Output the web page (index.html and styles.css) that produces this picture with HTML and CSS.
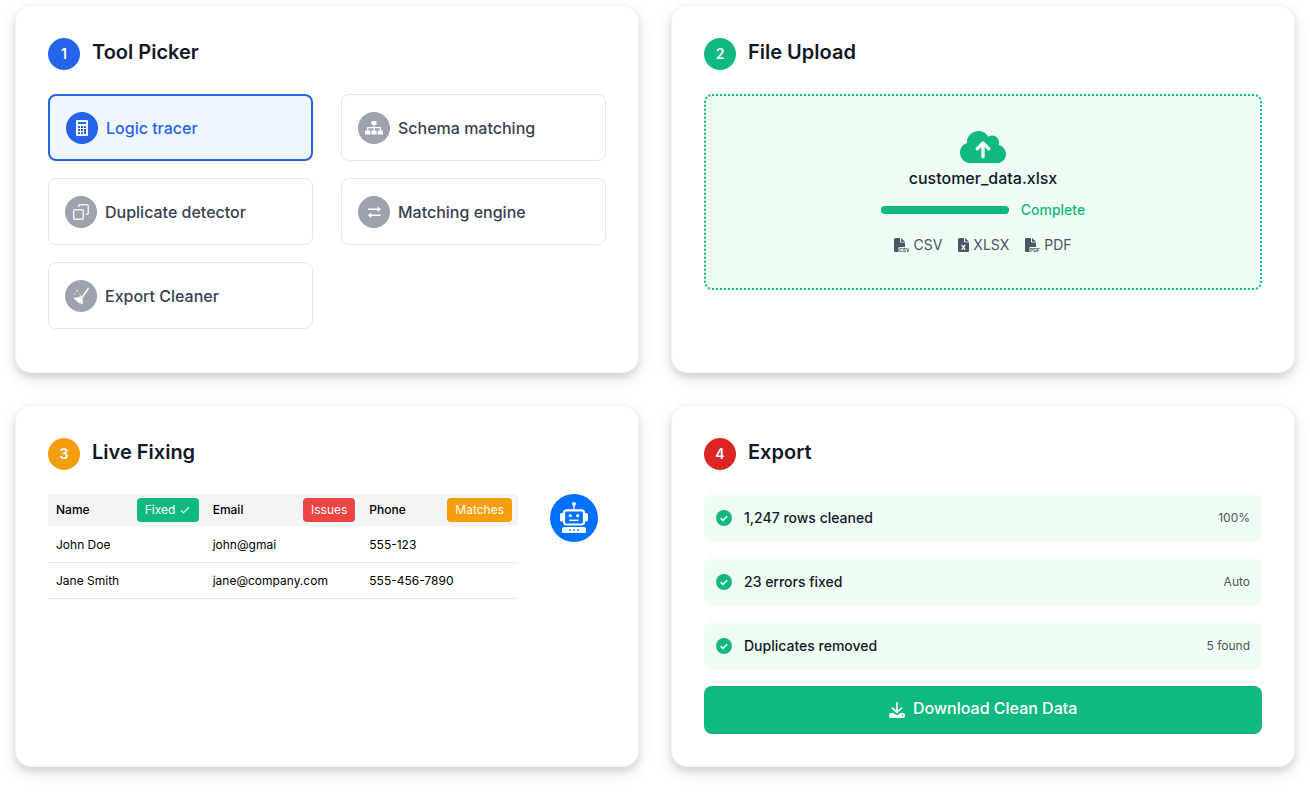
FILE: index.html
```html
<!DOCTYPE html>
<html lang="en">
<head>
  <meta charset="UTF-8">
  <meta name="viewport" content="width=device-width, initial-scale=1">
  <title>Data cleaning steps</title>
  <link rel="stylesheet" href="styles.css">
</head>
<body>
  <main class="steps">
    <section class="card">
      <header class="card-header">
        <span class="step blue">1</span>
        <h2>Tool Picker</h2>
      </header>
      <div class="tools">
        <button type="button" class="tool selected" aria-pressed="true">
          <span class="tool-icon">
            <svg width="12" height="16" viewBox="0 0 12 16"><path fill="#fff" fill-rule="evenodd" d="M1 0h10a1 1 0 0 1 1 1v14a1 1 0 0 1-1 1H1a1 1 0 0 1-1-1V1a1 1 0 0 1 1-1zM2 2v2h8V2zM2 6v2h2V6zM5 6v2h2V6zM8 6v2h2V6zM2 9v2h2V9zM5 9v2h2V9zM8 9v5h2V9zM2 12v2h2v-2zM5 12v2h2v-2z"/></svg>
          </span>
          Logic tracer
        </button>
        <button type="button" class="tool" aria-pressed="false">
          <span class="tool-icon">
            <svg width="18" height="14" viewBox="0 0 18 14"><g fill="#fff"><rect x="6.5" y="0" width="5" height="4" rx=".5"/><rect x="0" y="9.5" width="5.3" height="4" rx=".5"/><rect x="6.3" y="9.5" width="5.3" height="4" rx=".5"/><rect x="12.6" y="9.5" width="5.3" height="4" rx=".5"/></g><path d="M9 4v6M2.7 10V6.7h12.6V10" fill="none" stroke="#fff" stroke-width="1.2"/></svg>
          </span>
          Schema matching
        </button>
        <button type="button" class="tool" aria-pressed="false">
          <span class="tool-icon">
            <svg width="18" height="18" viewBox="0 0 18 18"><g fill="none" stroke="#fff" stroke-width="1.5" opacity=".85"><rect x="1.700" y="6.700" width="9.600" height="9.600" rx="1.200"/><path d="M6.700 4V2.900a1.200 1.200 0 0 1 1.200-1.200h7.200a1.200 1.200 0 0 1 1.200 1.200v7.200a1.200 1.200 0 0 1-1.200 1.200H14"/></g></svg>
          </span>
          Duplicate detector
        </button>
        <button type="button" class="tool" aria-pressed="false">
          <span class="tool-icon">
            <svg width="16" height="14" viewBox="0 0 16 14"><path d="M2 4.200h10M14.500 10.200h-10" stroke="#fff" stroke-width="1.600"/><path fill="#fff" d="M11.500 1.500L15 4.200l-3.500 2.700zM5.300 7.500l-3.500 2.700 3.500 2.700z"/></svg>
          </span>
          Matching engine
        </button>
        <button type="button" class="tool" aria-pressed="false">
          <span class="tool-icon">
            <svg width="18" height="18" viewBox="0 0 18 18"><path d="M16.300 1.500L11 9" stroke="#fff" stroke-width="1.300" stroke-linecap="round"/><path fill="#fff" d="M8.600 8.200l3 2.100-.5 1.200-3.300-2.300zM7.200 9.500l3.600 2.500c.4 1.900 0 3.600-.5 5.200l-1.500-.4-.2-1-.7.700-1.400-.7v-1.200l-.9.700-1.400-1.300.3-1.100-1 .3c-.7-.7-1.300-1.600-2-2.700 2.300.5 4 .2 5.700-1z"/><g fill="#fff" opacity=".8"><circle cx="2.500" cy="7" r=".8"/><circle cx="5" cy="3.700" r=".9"/><circle cx="7" cy="6" r=".6"/></g></svg>
          </span>
          Export Cleaner
        </button>
      </div>
    </section>

    <section class="card">
      <header class="card-header">
        <span class="step green">2</span>
        <h2>File Upload</h2>
      </header>
      <div class="dropzone">
        <svg width="46" height="38" viewBox="0 0 640 512"><path fill="#10b981" d="M144 480C64.500 480 0 415.500 0 336c0-62.800 40.200-116.200 96.200-135.900-.1-2.700-.2-5.400-.2-8.100 0-88.400 71.600-160 160-160 59.300 0 111 32.200 138.700 80.200C409.900 102 428.300 96 448 96c53 0 96 43 96 96 0 12.200-2.300 23.800-6.400 34.600C596 238.400 640 290.100 640 352c0 70.700-57.300 128-128 128H144zm79-217c-9.400 9.400-9.400 24.600 0 33.900s24.600 9.400 33.900 0l39-39V392c0 13.300 10.700 24 24 24s24-10.700 24-24V257.900l39 39c9.400 9.400 24.600 9.400 33.900 0s9.400-24.600 0-33.900l-80-80c-9.400-9.400-24.600-9.400-33.900 0l-80 80z"/></svg>
        <p class="filename" id="filename">customer_data.xlsx</p>
        <div class="upload-status">
          <progress value="100" max="100" aria-labelledby="filename"></progress>
          <span>Complete</span>
        </div>
        <ul class="formats">
          <li>
            <svg width="15" height="15" viewBox="0 0 15 15"><path fill="#4b5563" d="M1.500 0H6v4.500h5V9H4.500v5H1.500A1.500 1.500 0 0 1 0 12.500v-11A1.500 1.500 0 0 1 1.500 0zM7 0l4 3.700H7z"/><text x="5" y="14" class="ext">CSV</text></svg>
            CSV
          </li>
          <li>
            <svg width="11" height="14" viewBox="0 0 11 14"><path fill="#4b5563" d="M1.500 0H6v4.300h5v8.200a1.500 1.500 0 0 1-1.500 1.500h-8A1.500 1.500 0 0 1 0 12.500v-11A1.500 1.500 0 0 1 1.500 0zM7 0l4 3.500H7z"/><path d="M3.700 6.800l3.600 5M7.300 6.800l-3.600 5" stroke="#fff" stroke-width="1.300"/></svg>
            XLSX
          </li>
          <li>
            <svg width="15" height="15" viewBox="0 0 15 15"><path fill="#4b5563" d="M1.500 0H6v4.500h5V9H4.500v5H1.500A1.500 1.500 0 0 1 0 12.500v-11A1.500 1.500 0 0 1 1.500 0zM7 0l4 3.700H7z"/><text x="5" y="14" class="ext">PDF</text></svg>
            PDF
          </li>
        </ul>
      </div>
    </section>

    <section class="card">
      <header class="card-header">
        <span class="step amber">3</span>
        <h2>Live Fixing</h2>
      </header>
      <div class="fixing">
        <table class="preview">
          <thead>
            <tr>
              <th><div class="col-head">Name <span class="tag green">Fixed <svg width="12" height="8" viewBox="0 0 12 8"><path d="M2 4.300l2.500 2.500L10 1.200" fill="none" stroke="#fff" stroke-width="1.100"/></svg></span></div></th>
              <th><div class="col-head">Email <span class="tag red">Issues</span></div></th>
              <th><div class="col-head">Phone <span class="tag amber">Matches</span></div></th>
            </tr>
          </thead>
          <tbody>
            <tr>
              <td>John Doe</td>
              <td>john@gmai</td>
              <td>555-123</td>
            </tr>
            <tr>
              <td>Jane Smith</td>
              <td>jane@company.com</td>
              <td>555-456-7890</td>
            </tr>
          </tbody>
        </table>
        <svg class="robot" width="48" height="48" viewBox="0 0 48 48">
          <circle cx="24" cy="24" r="24" fill="#0070ff"/>
          <circle cx="24" cy="10" r="2" fill="#fff"/>
          <path d="M24 11v5" stroke="#fff" stroke-width="1.300"/>
          <rect x="14" y="16.300" width="20" height="14.200" rx="2.500" fill="none" stroke="#fff" stroke-width="2.200"/>
          <path fill="#fff" d="M13 19v8.500h-1.500A1.500 1.500 0 0 1 10 26v-5.500a1.500 1.500 0 0 1 1.500-1.500zM35 19v8.500h1.500A1.500 1.500 0 0 0 38 26v-5.500a1.500 1.500 0 0 0-1.500-1.500z"/>
          <circle cx="20.300" cy="21.700" r="1.600" fill="#fff"/>
          <circle cx="27.700" cy="21.700" r="1.600" fill="#fff"/>
          <path d="M19.300 26.300h9.400" stroke="#fff" stroke-width="1.500"/>
          <path fill="#fff" d="M14 33h20a2 2 0 0 1 2 2v3a1 1 0 0 1-1 1H13a1 1 0 0 1-1-1v-3a2 2 0 0 1 2-2z"/>
          <path d="M19.300 36h1.600M23.200 36h1.600M27.100 36h1.600" stroke="#0070ff" stroke-width="1.600"/>
        </svg>
      </div>
    </section>

    <section class="card">
      <header class="card-header">
        <span class="step crimson">4</span>
        <h2>Export</h2>
      </header>
      <ul class="results">
        <li>
          <svg width="16" height="16" viewBox="0 0 16 16"><circle cx="8" cy="8" r="8" fill="#10b981"/><path d="M4.600 8.200l2.300 2.200 4.200-4.200" fill="none" stroke="#fff" stroke-width="1.500"/></svg>
          <span class="result">1,247 rows cleaned</span>
          <span class="detail">100%</span>
        </li>
        <li>
          <svg width="16" height="16" viewBox="0 0 16 16"><circle cx="8" cy="8" r="8" fill="#10b981"/><path d="M4.600 8.200l2.300 2.200 4.200-4.200" fill="none" stroke="#fff" stroke-width="1.500"/></svg>
          <span class="result">23 errors fixed</span>
          <span class="detail">Auto</span>
        </li>
        <li>
          <svg width="16" height="16" viewBox="0 0 16 16"><circle cx="8" cy="8" r="8" fill="#10b981"/><path d="M4.600 8.200l2.300 2.200 4.200-4.200" fill="none" stroke="#fff" stroke-width="1.500"/></svg>
          <span class="result">Duplicates removed</span>
          <span class="detail">5 found</span>
        </li>
      </ul>
      <button type="button" class="download">
        <svg width="16" height="16" viewBox="0 0 16 16"><path d="M8 .8v9.500M3.500 6.100L8 10.300l4.500-4.200" fill="none" stroke="#fff" stroke-width="1.600" stroke-linecap="round"/><path fill="#fff" fill-rule="evenodd" d="M2 11h2.500l2 1.500a2.300 2.300 0 0 0 3 0l2-1.500H14a2 2 0 0 1 2 2v1a2 2 0 0 1-2 2H2a2 2 0 0 1-2-2v-1a2 2 0 0 1 2-2zm11.500 1.700a.8.8 0 1 0 0 1.600.8.8 0 0 0 0-1.600z"/></svg>
        Download Clean Data
      </button>
    </section>
  </main>
</body>
</html>
```
FILE: styles.css
```css
* { box-sizing: border-box; }

body {
  margin: 0;
  background-color: #fff;
  color: #111827;
  font-family: Inter, "Liberation Sans", sans-serif;
  font-size: 16px;
}

h2, p, ul { margin: 0; padding: 0; }
ul { list-style: none; }
svg { flex: none; }
button { font: inherit; cursor: pointer; }

.steps {
  display: grid;
  grid-template-columns: 1fr 1fr;
  gap: 32px;
  padding: 5px 15px 24px;
}

.card {
  padding: 32px;
  background-color: #fff;
  border: 1px solid #f3f4f6;
  border-radius: 16px;
  box-shadow: 0 4px 6px rgba(0, 0, 0, 0.1), 0 6px 16px rgba(0, 0, 0, 0.1);
}

.card-header {
  display: flex;
  align-items: flex-start;
  gap: 12px;
  margin-bottom: 24px;
}
.card-header h2 {
  font-size: 20px;
  font-weight: 600;
  line-height: 28px;
}

.step {
  width: 32px;
  height: 32px;
  border-radius: 50%;
  color: #fff;
  font-size: 14px;
  font-weight: 600;
  line-height: 32px;
  text-align: center;
}

.blue { background-color: #2563eb; }
.green { background-color: #10b981; }
.amber { background-color: #f59e0b; }
.red { background-color: #ef4444; }
.crimson { background-color: #dc2626; }

/* tool picker */
.tools {
  display: grid;
  grid-template-columns: 1fr 1fr;
  gap: 17px 28px;
  padding-bottom: 11px;
}
.tool {
  display: flex;
  align-items: center;
  gap: 8px;
  height: 67px;
  padding: 0 16px;
  background-color: #fff;
  border: 1px solid #e5e7eb;
  border-radius: 8px;
  color: #374151;
  font-weight: 500;
}
.tool.selected {
  background-color: #eff6ff;
  border: 2px solid #2563eb;
  color: #2563eb;
}
.tool-icon {
  display: flex;
  align-items: center;
  justify-content: center;
  width: 32px;
  height: 32px;
  border-radius: 50%;
  background-color: #9ca3af;
}
.selected .tool-icon { background-color: #2563eb; }

/* file upload */
.dropzone {
  display: flex;
  flex-direction: column;
  align-items: center;
  padding: 32px;
  background-color: #f0fdf4;
  border: 2px dotted #10b981;
  border-radius: 8px;
}
.filename {
  font-weight: 500;
  line-height: 24px;
}
.upload-status {
  display: flex;
  align-items: center;
  gap: 12px;
  margin: 8px 0 12px;
  color: #10b981;
  font-size: 14px;
  font-weight: 500;
  line-height: 24px;
}
progress {
  appearance: none;
  width: 128px;
  height: 8px;
  border: none;
}
progress::-webkit-progress-bar {
  background-color: #e5e7eb;
  border-radius: 4px;
}
progress::-webkit-progress-value {
  background-color: #10b981;
  border-radius: 4px;
}
.formats {
  display: flex;
  gap: 16px;
  color: #4b5563;
  font-size: 14px;
  line-height: 22px;
}
.formats li {
  display: flex;
  align-items: center;
  gap: 4px;
}
.ext {
  fill: #4b5563;
  font-size: 5px;
  font-weight: 700;
}

/* live fixing */
.fixing {
  display: flex;
  align-items: flex-start;
  gap: 32px;
  padding-right: 8px;
}
.preview {
  width: 100%;
  table-layout: fixed;
  border-collapse: collapse;
  color: #000;
  font-size: 12px;
  line-height: 16px;
}
.preview th {
  height: 32px;
  padding: 0 6px 0 8px;
  background-color: #f3f4f6;
  font-weight: 500;
  text-align: left;
}
.col-head {
  display: flex;
  align-items: center;
  justify-content: space-between;
}
.preview td {
  height: 36px;
  padding: 2px 8px 0;
  border-bottom: 1px solid #e5e7eb;
}
.tag {
  padding: 4px 8px;
  border-radius: 4px;
  color: #fff;
  font-weight: 400;
}

/* export */
.results li {
  display: flex;
  align-items: center;
  gap: 12px;
  height: 48px;
  margin-bottom: 16px;
  padding: 0 12px;
  background-color: #f0fdf4;
  border-radius: 8px;
}
.result {
  flex: 1;
  padding-bottom: 2px;
  font-size: 14px;
  font-weight: 500;
}
.detail {
  padding-bottom: 2px;
  color: #4b5563;
  font-size: 12px;
}
.download {
  width: 100%;
  height: 48px;
  padding: 10px 0 14px;
  background-color: #10b981;
  border: none;
  border-radius: 8px;
  color: #fff;
  font-weight: 500;
  line-height: 24px;
}
.download svg {
  margin-right: 4px;
  vertical-align: -4px;
}
```
